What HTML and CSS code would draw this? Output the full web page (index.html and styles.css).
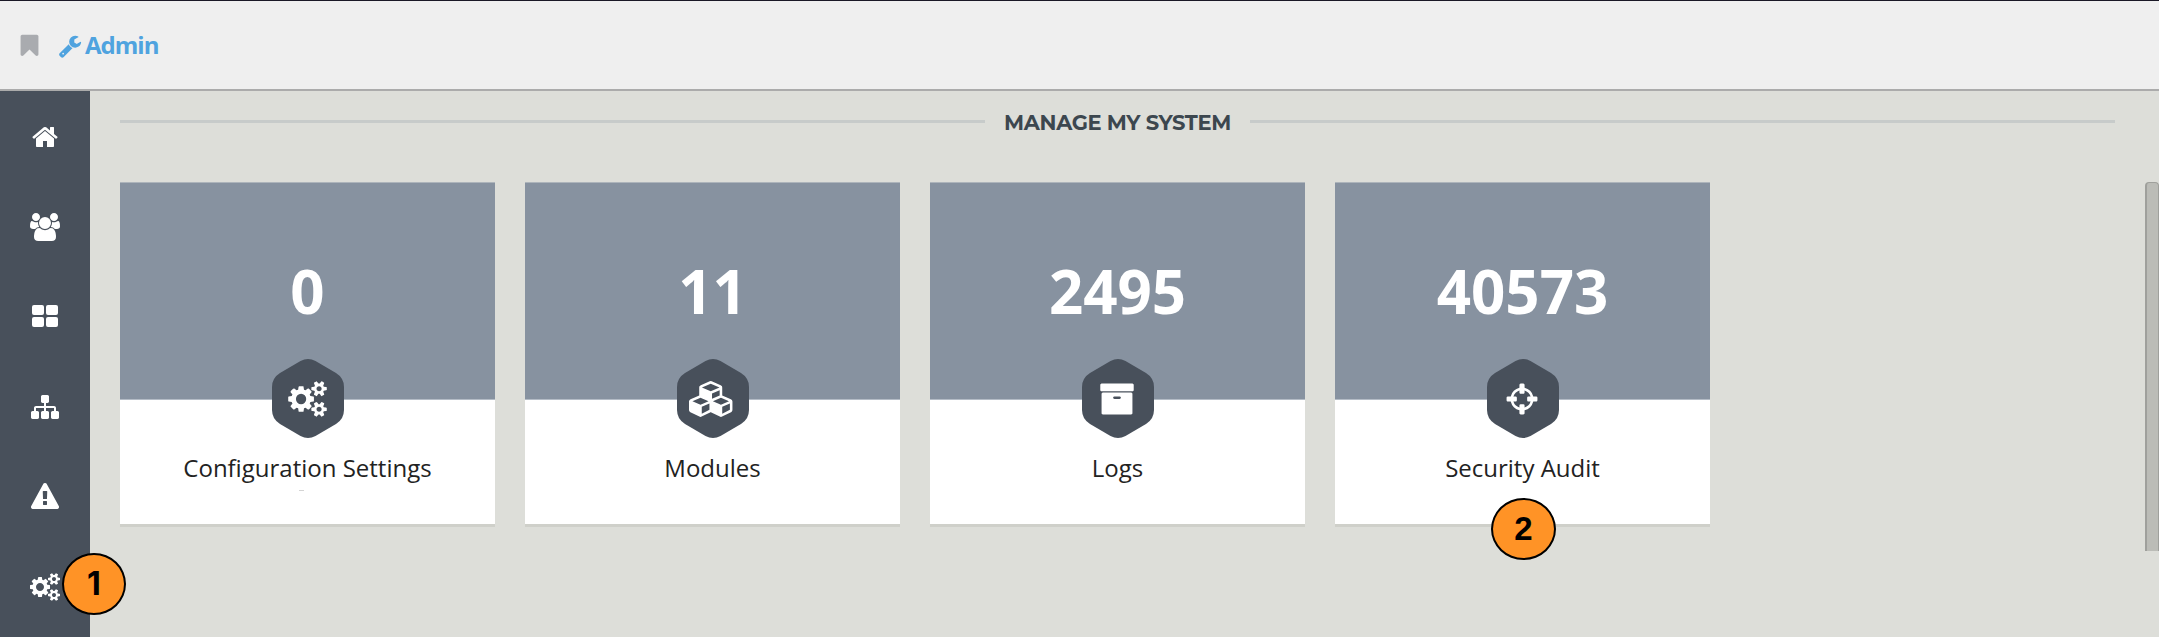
FILE: index.html
```html
<!DOCTYPE html>
<html lang="en">
<head>
<meta charset="utf-8">
<title>Admin</title>
<link rel="stylesheet" href="styles.css">
</head>
<body>
<svg class="defs" aria-hidden="true">
  <symbol id="cogs" viewBox="-64 0 1920 1792">
    <path d="M832 896q0-106-75-181t-181-75-181 75-75 181 75 181 181 75 181-75 75-181zm768 512q0-52-38-90t-90-38-90 38-38 90q0 53 37.500 90.500t90.500 37.500 90.500-37.500 37.500-90.500zm0-1024q0-52-38-90t-90-38-90 38-38 90q0 53 37.500 90.500t90.500 37.500 90.500-37.500 37.500-90.500zm-384 421v185q0 10-7 19.500t-16 10.500l-155 24q-11 35-32 76 34 48 90 115 7 11 7 20 0 12-7 19-23 30-82.500 89.500t-78.500 59.500q-11 0-21-7l-115-90q-37 19-77 31-11 108-23 155-7 24-30 24h-186q-11 0-20-7.500t-10-17.500l-23-153q-34-10-75-31l-118 89q-7 7-20 7-11 0-21-8-144-133-144-160 0-9 7-19 10-14 41-53t47-61q-23-44-35-82l-152-24q-10-1-17-9.500t-7-19.500v-185q0-10 7-19.500t16-10.500l155-24q11-35 32-76-34-48-90-115-7-11-7-20 0-12 7-20 22-30 82-89t79-59q11 0 21 7l115 90q34-18 77-32 11-108 23-154 7-24 30-24h186q11 0 20 7.500t10 17.500l23 153q34 10 75 31l118-89q8-7 20-7 11 0 21 8 144 133 144 160 0 8-7 19-12 16-42 54t-45 60q23 48 34 82l152 23q10 2 17 10.500t7 19.500zm640 533v140q0 16-149 31-12 27-30 52 51 113 51 138 0 4-4 7-122 71-124 71-8 0-46-47t-52-68q-20 2-30 2t-30-2q-14 21-52 68t-46 47q-2 0-124-71-4-3-4-7 0-25 51-138-18-25-30-52-149-15-149-31v-140q0-16 149-31 13-29 30-52-51-113-51-138 0-4 4-7 4-2 35-20t59-34 30-16q8 0 46 46.500t52 67.500q20-2 30-2t30 2q51-71 92-112l6-2q4 0 124 70 4 3 4 7 0 25-51 138 17 23 30 52 149 15 149 31zm0-1024v140q0 16-149 31-12 27-30 52 51 113 51 138 0 4-4 7-122 71-124 71-8 0-46-47t-52-68q-20 2-30 2t-30-2q-14 21-52 68t-46 47q-2 0-124-71-4-3-4-7 0-25 51-138-18-25-30-52-149-15-149-31v-140q0-16 149-31 13-29 30-52-51-113-51-138 0-4 4-7 4-2 35-20t59-34 30-16q8 0 46 46.500t52 67.500q20-2 30-2t30 2q51-71 92-112l6-2q4 0 124 70 4 3 4 7 0 25-51 138 17 23 30 52 149 15 149 31z"/>
  </symbol>
  <symbol id="hexagon" viewBox="0 0 72 79">
    <path d="M28.500 2Q36-2 43.500 2L64 14Q72 19 72 28V51Q72 60 64 65L43.500 77Q36 81 28.500 77L8 65Q0 60 0 51V28Q0 19 8 14Z"/>
  </symbol>
</svg>

<header class="topbar">
  <svg class="topbar-icon bookmark" viewBox="0 0 1792 1792"><path d="M1420 128q23 0 44 9 33 13 52.500 41t19.500 62v1289q0 34-19.500 62t-52.500 41q-19 8-44 8-48 0-83-32l-441-424-441 424q-36 33-83 33-23 0-44-9-33-13-52.500-41t-19.500-62v-1289q0-34 19.500-62t52.500-41q21-9 44-9h1048z"/></svg>
  <a class="crumb">
    <svg class="topbar-icon" viewBox="0 0 1792 1792"><path d="M448 1472q0-26-19-45t-45-19-45 19-19 45 19 45 45 19 45-19 19-45zm644-420l-682 682q-37 37-90 37-52 0-91-37l-106-108q-38-36-38-90 0-53 38-91l681-681q39 98 114.500 173.500t173.500 114.500zm634-435q0 39-23 106-47 134-164.500 217.500t-258.500 83.500q-185 0-316.500-131.500t-131.500-316.500 131.500-316.500 316.500-131.500q58 0 121.500 16.500t107.500 46.500q16 11 16 28t-16 28l-293 169v224l193 107q5-3 79-48.500t135.500-81 70.500-35.500q15 0 23.500 10t8.500 25z"/></svg>
    <span>Admin</span>
  </a>
</header>

<div class="layout">
  <nav class="sidebar">
    <a class="nav-item"><svg class="nav-icon" viewBox="0 0 1792 1792"><path d="M1472 992v480q0 26-19 45t-45 19h-384v-384h-256v384h-384q-26 0-45-19t-19-45v-480q0-1 .5-3t.5-3l575-474 575 474q1 2 1 6zm223-69l-62 74q-8 9-21 11h-3q-13 0-21-7l-692-577-692 577q-12 8-24 7-13-2-21-11l-62-74q-8-10-7-23.500t11-21.500l719-599q32-26 76-26t76 26l244 204v-195q0-14 9-23t23-9h192q14 0 23 9t9 23v408l219 182q10 8 11 21.500t-7 23.500z"/></svg></a>
    <a class="nav-item"><svg class="nav-icon wide" viewBox="-64 0 1920 1792"><path d="M529 896q-162 5-265 128h-134q-82 0-138-40.500t-56-118.500q0-353 124-353 6 0 43.500 21t97.500 42.500 119 21.500q67 0 133-23-5 37-5 66 0 139 81 256zm1071 637q0 120-73 189.500t-194 69.500h-874q-121 0-194-69.500t-73-189.500q0-53 3.500-103.500t14-109 26.500-108.500 43-97.500 62-81 85.500-53.500 111.500-20q10 0 43 21.500t73 48 107 48 135 21.500 135-21.500 107-48 73-48 43-21.500q61 0 111.500 20t85.500 53.500 62 81 43 97.500 26.500 108.500 14 109 3.500 103.500zm-1024-1277q0 106-75 181t-181 75-181-75-75-181 75-181 181-75 181 75 75 181zm704 384q0 159-112.500 271.500t-271.500 112.500-271.500-112.500-112.500-271.500 112.500-271.500 271.500-112.500 271.500 112.500 112.500 271.500zm576 225q0 78-56 118.500t-138 40.500h-134q-103-123-265-128 81-117 81-256 0-29-5-66 66 23 133 23 59 0 119-21.500t97.500-42.500 43.500-21q124 0 124 353zm-128-609q0 106-75 181t-181 75-181-75-75-181 75-181 181-75 181 75 75 181z"/></svg></a>
    <a class="nav-item"><svg class="nav-icon" viewBox="0 0 1792 1792"><rect x="64" y="128" width="768" height="640" rx="128"/><rect x="960" y="128" width="768" height="640" rx="128"/><rect x="64" y="896" width="768" height="640" rx="128"/><rect x="960" y="896" width="768" height="640" rx="128"/></svg></a>
    <a class="nav-item"><svg class="nav-icon" viewBox="0 0 1792 1792"><path d="M1792 1248v320q0 40-28 68t-68 28h-320q-40 0-68-28t-28-68v-320q0-40 28-68t68-28h96v-192h-512v192h96q40 0 68 28t28 68v320q0 40-28 68t-68 28h-320q-40 0-68-28t-28-68v-320q0-40 28-68t68-28h96v-192h-512v192h96q40 0 68 28t28 68v320q0 40-28 68t-68 28h-320q-40 0-68-28t-28-68v-320q0-40 28-68t68-28h96v-192q0-52 38-90t90-38h512v-192h-96q-40 0-68-28t-28-68v-320q0-40 28-68t68-28h320q40 0 68 28t28 68v320q0 40-28 68t-68 28h-96v192h512q52 0 90 38t38 90v192h96q40 0 68 28t28 68z"/></svg></a>
    <a class="nav-item"><svg class="nav-icon" viewBox="0 0 1792 1792"><path d="M1024 1375v-190q0-14-9.500-23.500t-22.500-9.500h-192q-13 0-22.500 9.500t-9.500 23.500v190q0 14 9.500 23.500t22.500 9.500h192q13 0 22.500-9.500t9.500-23.500zm-2-374l18-459q0-12-10-19-13-11-24-11h-220q-11 0-24 11-10 7-10 21l17 457q0 10 10 16.500t24 6.500h185q14 0 23.500-6.500t10.500-16.500zm-14-934l768 1408q35 63-2 126-17 29-46.500 46t-63.500 17h-1536q-34 0-63.500-17t-46.500-46q-37-63-2-126l768-1408q17-31 47-49t65-18 65 18 47 49z"/></svg></a>
    <a class="nav-item"><svg class="nav-icon wide"><use href="#cogs"/></svg><span class="marker marker-nav">1</span></a>
  </nav>

  <main class="content">
    <h2 class="section-title"><span>MANAGE MY SYSTEM</span></h2>
    <div class="cards">
      <a class="card">
        <div class="card-count">0</div>
        <div class="card-badge"><svg class="hexagon"><use href="#hexagon"/></svg><svg class="card-icon cogs"><use href="#cogs"/></svg></div>
        <div class="card-label">Configuration Settings</div>
        <i class="card-tick"></i>
      </a>
      <a class="card">
        <div class="card-count">11</div>
        <div class="card-badge"><svg class="hexagon"><use href="#hexagon"/></svg><svg class="card-icon cubes" viewBox="0 0 2304 1792"><path d="M640 1632l384-192v-314l-384 164v342zm-64-454l404-173-404-173-404 173zm1088 454l384-192v-314l-384 164v342zm-64-454l404-173-404-173-404 173zm-448-293l384-165v-266l-384 164v267zm-64-379l441-189-441-189-441 189zm1088 518v416q0 36-19 67t-52 47l-448 224q-25 14-57 14t-57-14l-448-224q-4-2-7-4-2 2-7 4l-448 224q-25 14-57 14t-57-14l-448-224q-33-16-52-47t-19-67v-416q0-38 21.500-70t56.500-48l434-186v-400q0-38 21.500-70t56.500-48l448-192q23-10 50-10t50 10l448 192q35 16 56.500 48t21.500 70v400l434 186q36 16 57 48t21 70z"/></svg></div>
        <div class="card-label">Modules</div>
      </a>
      <a class="card">
        <div class="card-count">2495</div>
        <div class="card-badge"><svg class="hexagon"><use href="#hexagon"/></svg><svg class="card-icon" viewBox="0 0 1792 1792"><path d="M1088 832q0-26-19-45t-45-19h-256q-26 0-45 19t-19 45 19 45 45 19h256q26 0 45-19t19-45zm576-192v960q0 26-19 45t-45 19h-1408q-26 0-45-19t-19-45v-960q0-26 19-45t45-19h1408q26 0 45 19t19 45zm64-448v256q0 26-19 45t-45 19h-1536q-26 0-45-19t-19-45v-256q0-26 19-45t45-19h1536q26 0 45 19t19 45z"/></svg></div>
        <div class="card-label">Logs</div>
      </a>
      <a class="card">
        <div class="card-count">40573</div>
        <div class="card-badge"><svg class="hexagon"><use href="#hexagon"/></svg><svg class="card-icon" viewBox="0 0 1792 1792"><path d="M1325 1024h-109q-26 0-45-19t-19-45v-128q0-26 19-45t45-19h109q-32-108-112.500-188.500t-188.500-112.500v109q0 26-19 45t-45 19h-128q-26 0-45-19t-19-45v-109q-108 32-188.500 112.500t-112.500 188.500h109q26 0 45 19t19 45v128q0 26-19 45t-45 19h-109q32 108 112.500 188.500t188.500 112.500v-109q0-26 19-45t45-19h128q26 0 45 19t19 45v109q108-32 188.500-112.500t112.500-188.500zm339-192v128q0 26-19 45t-45 19h-143q-37 161-154.500 278.500t-278.500 154.500v143q0 26-19 45t-45 19h-128q-26 0-45-19t-19-45v-143q-161-37-278.500-154.500t-154.500-278.500h-143q-26 0-45-19t-19-45v-128q0-26 19-45t45-19h143q37-161 154.500-278.500t278.500-154.500v-143q0-26 19-45t45-19h128q26 0 45 19t19 45v143q161 37 278.500 154.500t154.500 278.500h143q26 0 45 19t19 45z"/></svg></div>
        <div class="card-label">Security Audit</div>
        <span class="marker marker-card">2</span>
      </a>
    </div>
  </main>

  <div class="scroll-track"><div class="scroll-thumb"></div></div>
</div>
</body>
</html>
```
FILE: styles.css
```css
* { box-sizing: border-box; }

body {
  margin: 0;
  height: 637px;
  display: flex;
  flex-direction: column;
  overflow: hidden;
  background: #ddded9;
  font-family: "Open Sans", "Noto Sans", sans-serif;
}

svg { display: block; fill: currentColor; flex: none; }
.defs { position: absolute; width: 0; height: 0; }

.topbar {
  flex: none;
  height: 91px;
  padding: 1px 0 0 17px;
  display: flex;
  align-items: center;
  gap: 16px;
  background: #efefef;
  border-top: 1px solid #1a1826;
  border-bottom: 2px solid #ababab;
}
.topbar-icon { width: 24px; height: 24px; }
.bookmark { width: 25px; height: 25px; color: #a9abaf; }
.crumb {
  display: flex;
  align-items: center;
  gap: 3px;
  color: #4fa3df;
  font-size: 24px;
  line-height: 32px;
  font-weight: 700;
  letter-spacing: -1px;
}
.crumb span { margin-top: -2px; }

.layout { flex: 1; display: flex; min-height: 0; }

.sidebar {
  flex: none;
  width: 90px;
  padding-top: 1px;
  background: #48505b;
  color: #fff;
}
.nav-item {
  position: relative;
  height: 90px;
  display: flex;
  align-items: center;
  justify-content: center;
}
.nav-icon { width: 28px; height: 28px; }
.nav-icon.wide { width: 30px; }

.content { flex: 1; padding: 14px 30px 0; }

.section-title {
  margin: 0;
  height: 34px;
  display: flex;
  align-items: center;
  gap: 19px;
  color: #3c474f;
  font-family: Montserrat, Inter, sans-serif;
  font-size: 21px;
  font-weight: 700;
  letter-spacing: -0.35px;
}
.section-title::before,
.section-title::after {
  content: "";
  flex: 1;
  height: 3px;
  margin-bottom: 2px;
  background: #c7cbca;
}

.cards { display: flex; gap: 30px; margin-top: 43px; }
.card {
  position: relative;
  width: 375px;
  height: 342px;
  display: flex;
  flex-direction: column;
  align-items: center;
  background: #fff;
  box-shadow: 0 3px 0 #cfd0ca;
}
.card-count {
  width: 100%;
  height: 218px;
  padding-top: 67px;
  background: #8792a0;
  border-top: 1px solid #adb4bb;
  border-bottom: 1px solid #b4bcc6;
  color: #fff;
  font-size: 60px;
  line-height: 82px;
  font-weight: 700;
  text-align: center;
}
.card-badge {
  display: grid;
  place-items: center;
  width: 72px;
  height: 79px;
  margin: -41px 0 0;
}
.card-badge > svg { grid-area: 1 / 1; }
.hexagon { width: 72px; height: 79px; color: #48505b; }
.card-icon { width: 36px; height: 36px; margin: 1px 1px 0 0; color: #fff; }
.card-icon.cogs { width: 39px; }
.card-icon.cubes { width: 46px; }
.card-label {
  margin-top: 13px;
  color: #222;
  font-size: 24px;
  line-height: 33px;
}
.card-tick { width: 5px; height: 1px; margin: 6px 12px 0 0; background: #d4d4d4; }

.marker {
  position: absolute;
  z-index: 2;
  width: 64px;
  height: 62px;
  border: 2px solid #000;
  border-radius: 50%;
  background: #ff9326;
  color: #000;
  font: bold 33px/58px "Liberation Sans", Arial, sans-serif;
  text-align: center;
}
.marker-nav { left: 62px; top: 11px; font-family: Inter, sans-serif; font-size: 32px; }
.marker-card { left: 156px; top: 316px; width: 65px; }

.scroll-track { flex: none; width: 14px; padding-top: 91px; }
.scroll-thumb {
  height: 369px;
  background: #bbbcb7;
  border: 1px solid #9fa09c;
  border-left-width: 2px;
  border-bottom: 0;
  border-radius: 4px 4px 0 0;
}
```
